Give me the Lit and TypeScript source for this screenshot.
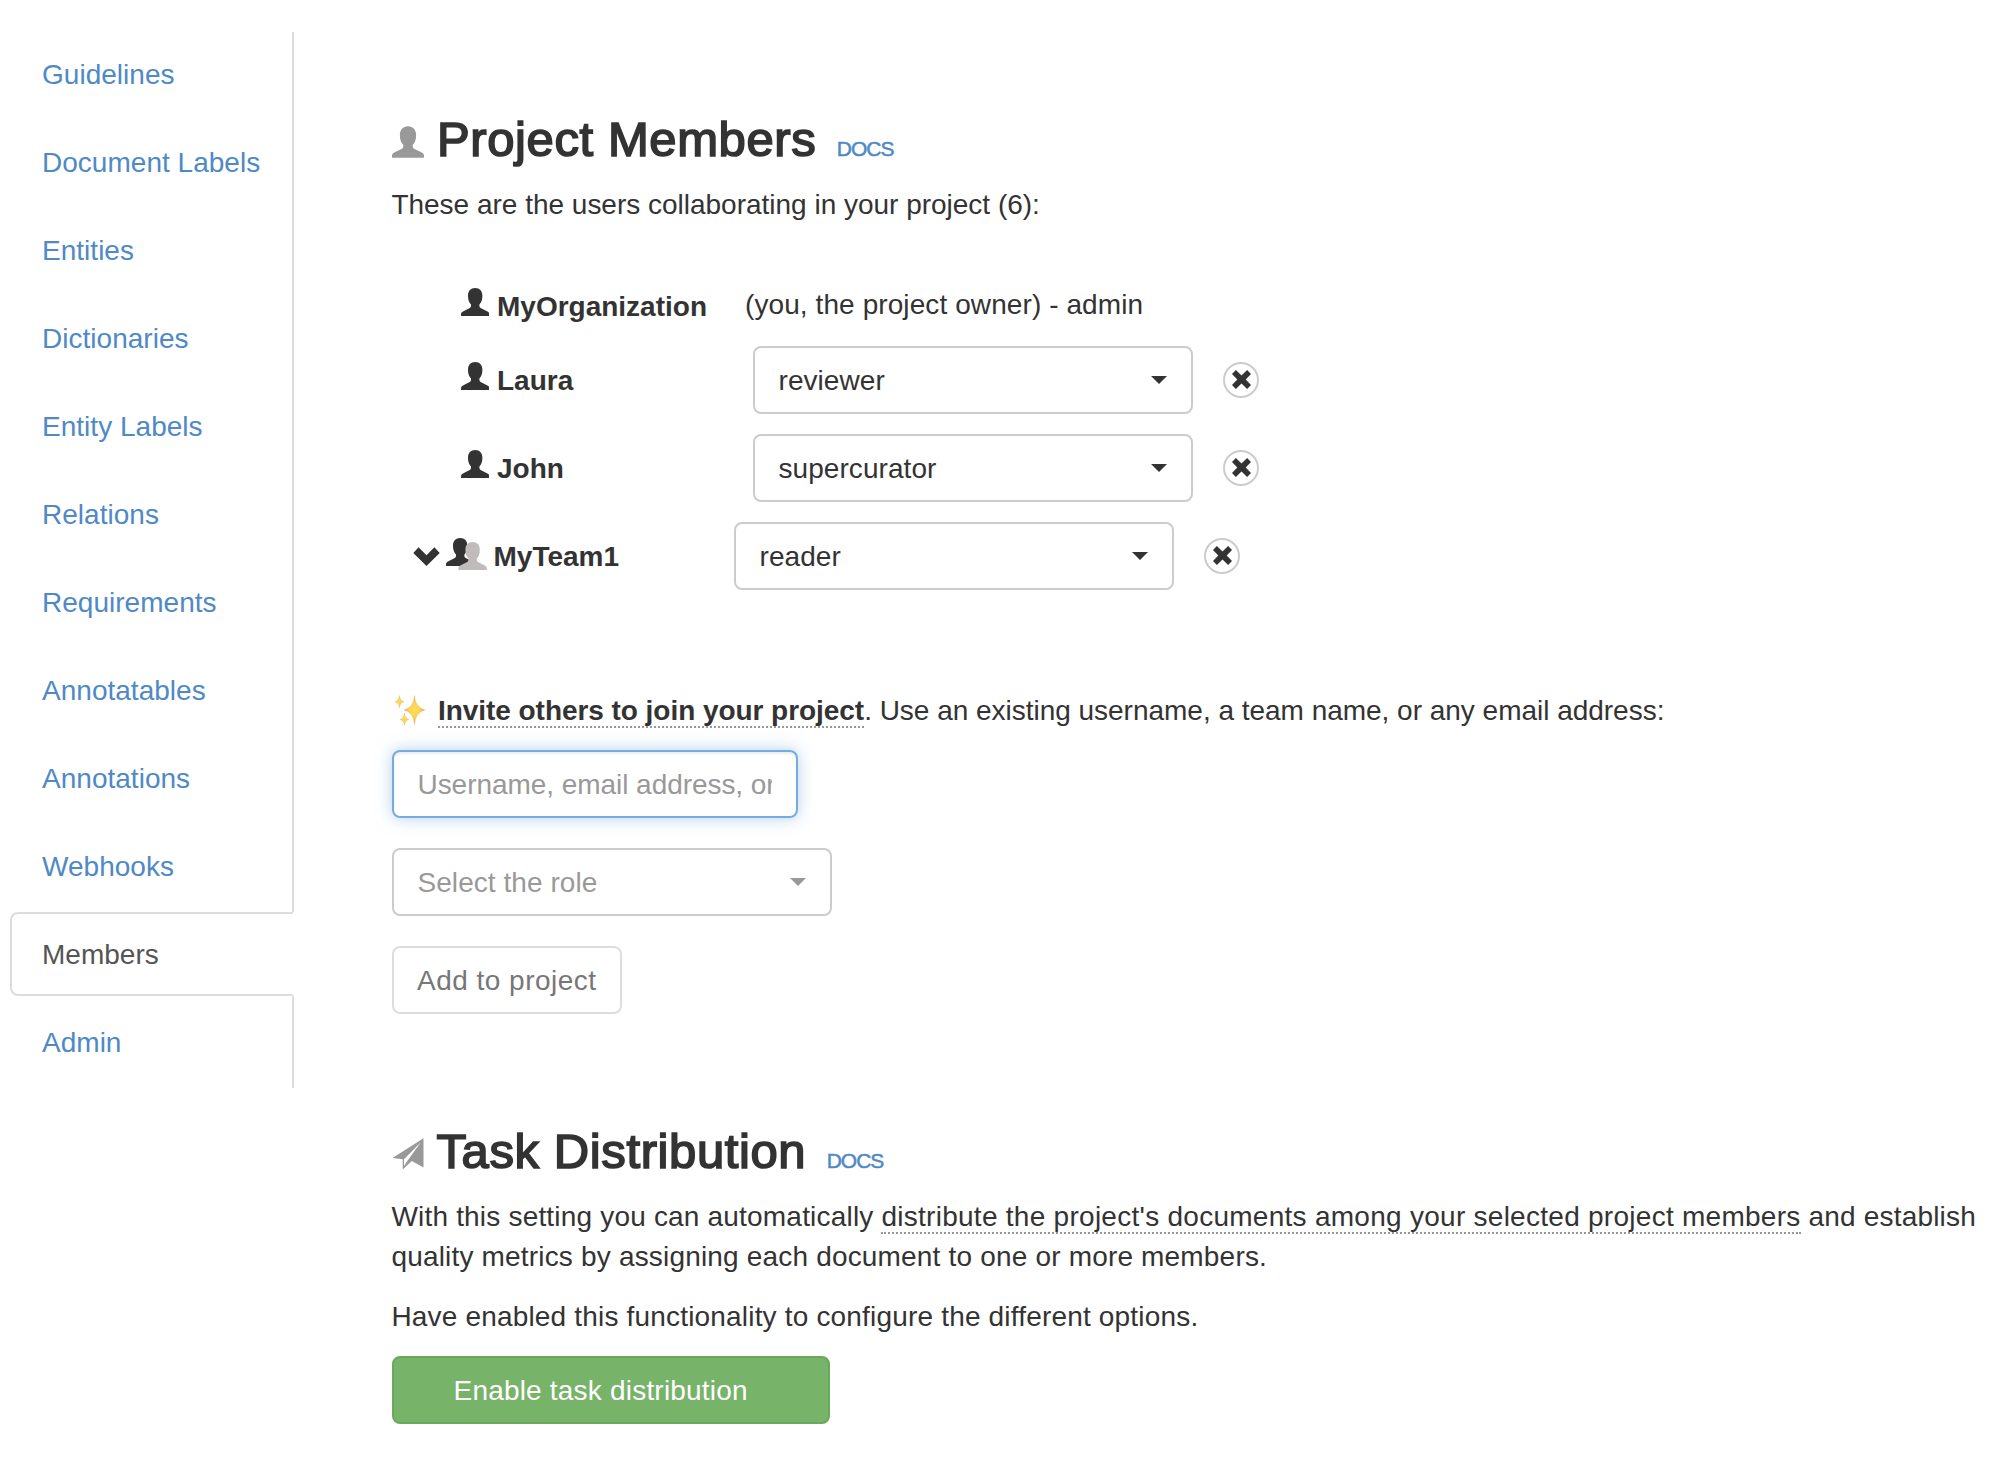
import { LitElement, html, css, svg, nothing } from "lit";
import { customElement, property } from "lit/decorators.js";

const person = svg`<path d="M14.2 0C9.700 0 7 3.100 7 7.700c0 3.700.9 6.700 3 8.900v1.200c0 1.300-.6 2-1.700 2.500L2.400 23.200C.7 24 0 24.900 0 26.300V28h28.400v-1.700c0-1.400-.7-2.300-2.400-3.100l-5.900-2.900c-1.100-.5-1.700-1.200-1.700-2.500v-1.200c2.100-2.200 3-5.200 3-8.900C21.400 3.100 18.700 0 14.200 0z"></path>`;

const icons = {
  person: html`<svg class="person" viewBox="0 0 28.4 28" width="28.4" height="28">${person}</svg>`,
  group: html`<svg class="group" viewBox="0 0 41 32" width="41" height="32">
    ${person}<g class="back" transform="translate(12.4 4)">${person}</g></svg>`,
  chevron: html`<svg class="chevron" viewBox="0 0 27 19" width="27" height="19">
    <path d="M.3 5.900 5.600.3l7.900 8 7.900-8 5.300 5.600-13.200 13z"></path></svg>`,
  plane: html`<svg viewBox="0 0 32 32" width="32" height="32">
    <path fill-rule="evenodd" d="M31.500.2V29.500L19.800 23 10.700 31.500V21.300L.5 20zM29 4 12 21.200V28l3.300-5z"></path></svg>`,
  remove: html`<svg viewBox="0 0 19 19" width="19" height="19">
    <path d="M0 4 3.900 0l5.600 5.500L15.100 0 19 4l-5.300 5.500L19 15l-3.900 4-5.600-5.400L3.900 19 0 15l5.300-5.500z"></path></svg>`,
  sparkles: html`<svg class="sparkles" viewBox="0 0 32 32" width="32" height="32">
    <defs><radialGradient id="gold"><stop offset="0" stop-color="#fbe04f"></stop><stop offset=".45" stop-color="#f8d35c"></stop><stop offset="1" stop-color="#eb9f6c"></stop></radialGradient></defs>
    <g fill="url(#gold)">
      <path d="M19.500.8q1.200 13 11 15.200-9.800 2.200-11 15.200-1.200-13-11-15.200 9.800-2.200 11-15.200z"></path>
      <path d="M4.500.8q.8 6 4.800 7-4 1-4.800 6.800-.8-5.800-4.800-6.800 4-1 4.800-7z"></path>
      <path d="M9.400 18.500q.8 6 4.800 7-4 1-4.800 6.500-.8-5.500-4.800-6.500 4-1 4.800-7z"></path>
    </g></svg>`,
};

const base = css`
  * { box-sizing: border-box; }
  svg { display: block; flex: none; fill: currentColor; }
`;

@customElement("role-select")
export class RoleSelect extends LitElement {
  @property() label = "";
  @property({ type: Boolean, reflect: true }) muted = false;
  static styles = [base, css`
    :host { display: block; }
    .box { display: flex; justify-content: space-between; width: 440px; height: 68px; padding: 13px 24px 0 23.5px; border: 2px solid #ccc; border-radius: 8px; background: #fff; color: #333; }
    .caret { width: 0; height: 0; margin-top: 15px; border: 8px solid transparent; border-top-color: currentColor; border-bottom: 0; }
    :host([muted]) .box { color: #999; }
    .label { letter-spacing: .06px; }
  `];
  render() {
    return html`<div class="box"><span class="label">${this.label}</span><span class="caret"></span></div>`;
  }
}

interface Member { name: string; role: string; kind: "owner" | "user" | "team"; }

@customElement("member-row")
export class MemberRow extends LitElement {
  @property({ attribute: false }) member!: Member;
  static styles = [base, css`
    :host { display: block; }
    .row { display: flex; align-items: flex-start; height: 68px; margin-bottom: 20px; padding-left: 69px; }
    .team { padding-left: 21px; }
    .name { display: flex; width: 292px; padding-top: 15px; font-weight: 700; }
    .team .name { width: 321px; }
    .owner { height: 41px; }
    .owner .name { width: 284px; padding-top: 2px; }
    .person { margin: 1px 7.600px 0 0; }
    .group { margin: 1px 7px 0 5.500px; }
    .chevron { margin-top: 10px; }
    .back { fill: #c1bcbc; }
    .note { letter-spacing: .09px; }
    .remove { display: flex; align-items: center; justify-content: center; width: 36px; height: 36px; margin: 16px 0 0 30px; border: 2px solid #ccc; border-radius: 50%; padding: 0 0 1px 1px; }
  `];
  render() {
    const m = this.member;
    return html`<div class="row ${m.kind}">
      <div class="name">${m.kind === "team" ? html`${icons.chevron}${icons.group}` : icons.person}<span>${m.name}</span></div>
      ${m.kind === "owner"
        ? html`<span class="note">${m.role}</span>`
        : html`<role-select label=${m.role}></role-select><span class="remove">${icons.remove}</span>`}
    </div>`;
  }
}

@customElement("app-root")
export class AppRoot extends LitElement {
  static styles = [base, css`
    :host { display: block; width: 1996px; height: 1460px; overflow: hidden; background: #fff; color: #333;
      font: 28px/40px "Liberation Sans", Arial, sans-serif; }
    .page { display: flex; align-items: flex-start; }
    .nav { flex: none; width: 284px; margin: 32px 97px 0 10px; padding: 0; list-style: none; border-right: 2px solid #ddd; }
    .nav li { margin: 0 -2px 4px 0; }
    .nav a { display: block; height: 84px; padding: 21px 30px 0; border: 2px solid transparent; border-radius: 8px 0 0 8px; color: #4f89c6; white-space: nowrap; letter-spacing: .02px; }
    .nav .active { border-color: #ddd; border-right-color: transparent; background: #fff; color: #555; }
    .main { flex: 1; padding: 109px 0 0 1px; white-space: nowrap; }
    h2 { display: flex; align-items: flex-start; height: 60px; margin: 0 0 16px; font-weight: 400; font-size: 49px; line-height: 60px; letter-spacing: .6px; -webkit-text-stroke: 1.700px #333; }
    h2 svg { width: 32px; height: 32px; margin: 17px 13px 0 0; color: #999; stroke: none; }
    .task svg { margin-right: 12.5px; }
    .docs { margin: 10px 0 0 20.500px; font-size: 21px; letter-spacing: -1px; color: #4f89c6; -webkit-text-stroke: .5px #4f89c6; }
    p { margin: 0; }
    .intro { margin-left: -.6px; letter-spacing: -.01px; }
    .members { height: 466px; padding-top: 60px; }
    .invite { display: flex; margin-left: 3px; margin-bottom: 19px; }
    .invite svg { margin: 3px 11px 0 0; }
    .term { border-bottom: 2px dotted #999; }
    .invite b { letter-spacing: -.05px; }
    .invite .rest { letter-spacing: -.02px; }
    .input { width: 406px; height: 68px; margin-bottom: 30px; padding: 13px 24px 0 23.5px; border: 2px solid #74abe2; border-radius: 8px; color: #999; letter-spacing: -.05px;
      box-shadow: inset 0 2px 2px rgba(0, 0, 0, .075), 0 0 16px rgba(116, 171, 226, .55); }
    .input div { overflow: hidden; }
    role-select { margin-bottom: 30px; }
    .add { width: 230px; height: 68px; margin-bottom: 107px; padding: 13px 23px 0; border: 2px solid #ddd; border-radius: 8px; color: #777; letter-spacing: .48px; }
    .text { margin: 0 0 20px -.6px; letter-spacing: .18px; }
    .text .lead { letter-spacing: .19px; }
    .text .term { letter-spacing: .27px; }
    .enable { width: 438px; height: 68px; padding: 13px 59.5px 0; border: 2px solid #6aa95c; border-radius: 8px; background: #77b369; color: #fff; letter-spacing: .2px; }
    .last { margin-bottom: 19px; }
  `];

  private nav = ["Guidelines", "Document Labels", "Entities", "Dictionaries", "Entity Labels", "Relations", "Requirements", "Annotatables", "Annotations", "Webhooks", "Members", "Admin"];
  private members: Member[] = [
    { name: "MyOrganization", role: "(you, the project owner) - admin", kind: "owner" },
    { name: "Laura", role: "reviewer", kind: "user" },
    { name: "John", role: "supercurator", kind: "user" },
    { name: "MyTeam1", role: "reader", kind: "team" },
  ];

  render() {
    return html`<div class="page">
      <ul class="nav">${this.nav.map((n) => html`<li><a class=${n === "Members" ? "active" : nothing}>${n}</a></li>`)}</ul>
      <div class="main">
        <h2>${icons.person}<span>Project Members</span><span class="docs">DOCS</span></h2>
        <p class="intro">These are the users collaborating in your project (6):</p>
        <div class="members">${this.members.map((m) => html`<member-row .member=${m}></member-row>`)}</div>
        <div class="invite">${icons.sparkles}<p><b class="term">Invite others to join your project</b><span class="rest">. Use an existing username, a team name, or any email address:</span></p></div>
        <div class="input"><div>Username, email address, or</div></div>
        <role-select muted label="Select the role"></role-select>
        <div class="add">Add to project</div>
        <h2 class="task">${icons.plane}<span>Task Distribution</span><span class="docs">DOCS</span></h2>
        <p class="text"><span class="lead">With this setting you can automatically </span><span class="term">distribute the project's documents among your selected project members</span> and establish<br>quality metrics by assigning each document to one or more members.</p>
        <p class="text last">Have enabled this functionality to configure the different options.</p>
        <div class="enable">Enable task distribution</div>
      </div>
    </div>`;
  }
}
